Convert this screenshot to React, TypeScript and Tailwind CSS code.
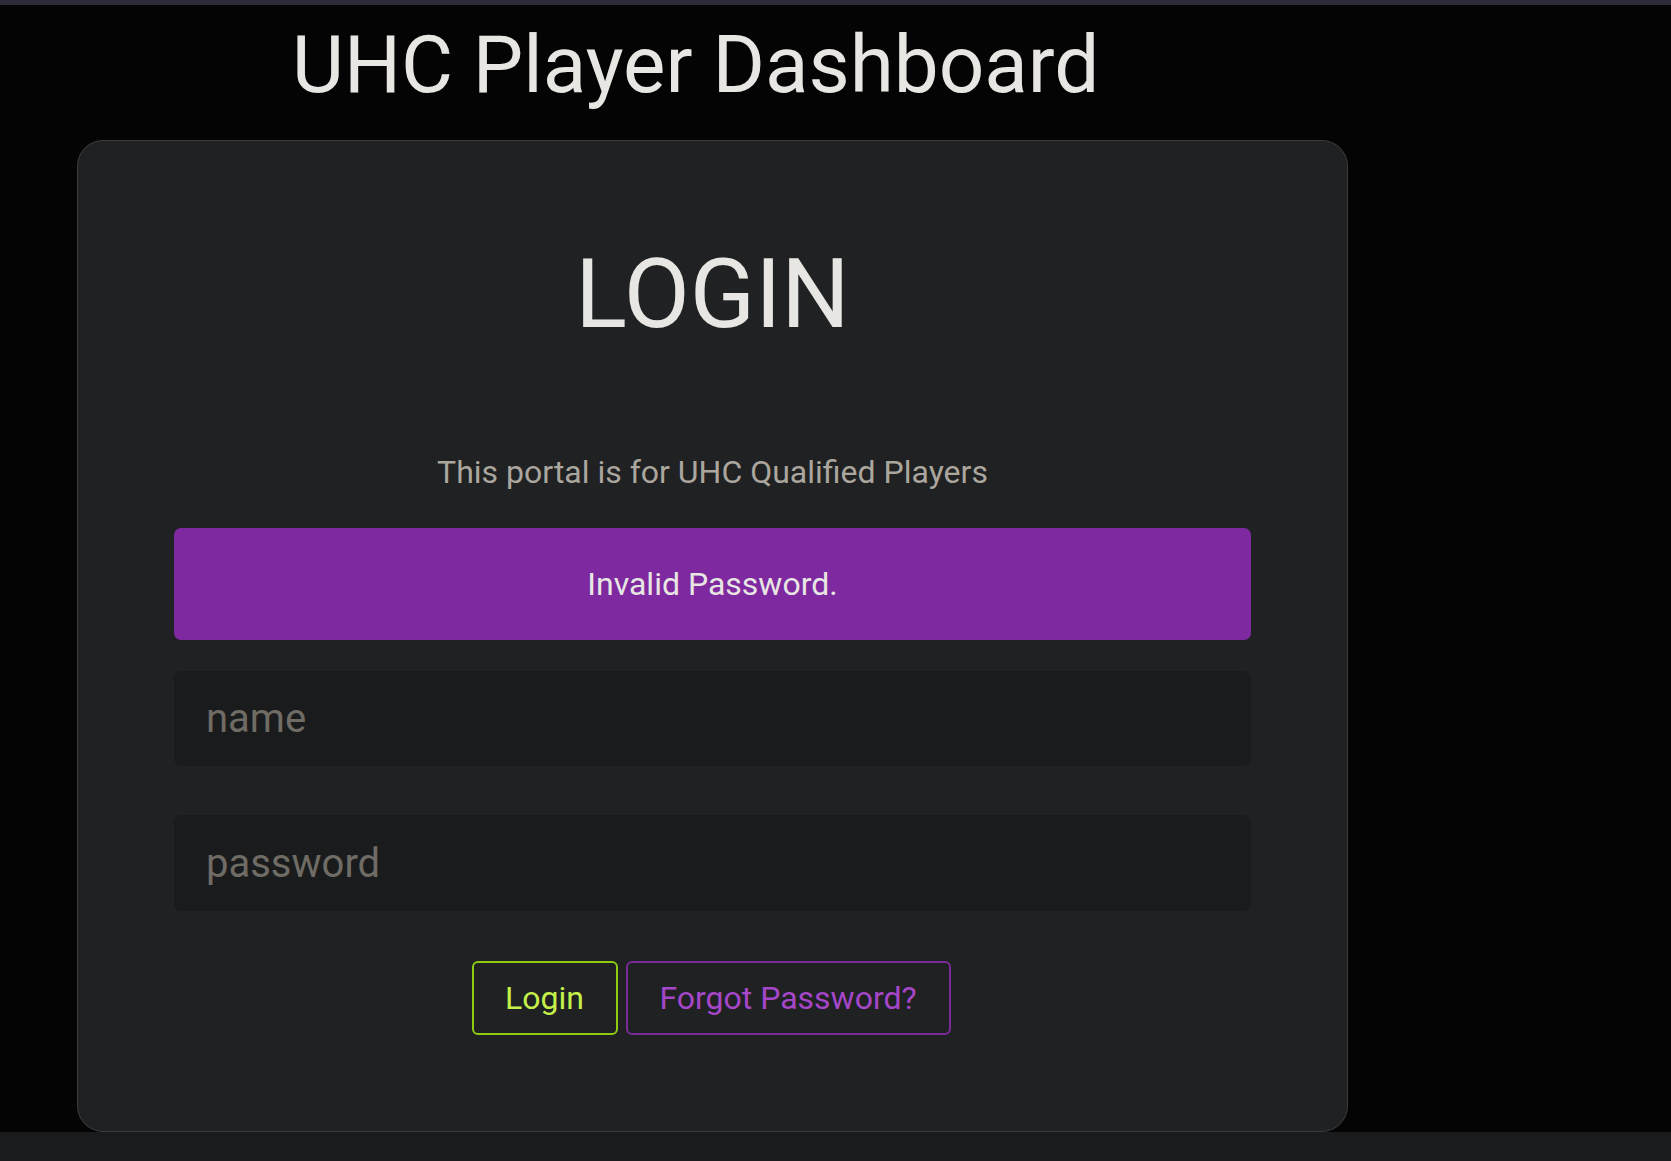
import React, { useState } from "react";

function App() {
  const [name, setName] = useState("");
  const [password, setPassword] = useState("");

  const handleLoginClick = () => {
    console.log("login", name);
  };
  const handleForgotClick = () => {
    console.log("forgot");
  };

  return (
    <div className="min-h-[1161px] bg-[#040404] font-['Roboto',sans-serif] flex flex-col">
      <div className="h-[5px] bg-[#2c2b37]"></div>
      <h1 className="mt-[13px] pl-[292px] text-[80px] leading-[94px] font-normal text-[#e8e6e3]">
        UHC Player Dashboard
      </h1>
      <div className="mt-[28px] ml-[77px] w-[1271px] rounded-[26px] border border-[#3a3c3e] bg-[#1f2122] px-[96px] pt-[97px] pb-[96px]">
        <div className="text-center text-[96px] leading-[113px] text-[#e8e6e3]">
          LOGIN
        </div>
        <p className="mt-[102px] text-center text-[32px] leading-[38px] text-[#aba69e]">
          This portal is for UHC Qualified Players
        </p>
        <div className="mt-[37px] flex h-[112px] items-center justify-center rounded-[7px] bg-[#7e29a0] text-[32px] text-[#e8e6e3]">
          Invalid Password.
        </div>
        <input
          type="text"
          placeholder="name"
          value={name}
          onChange={(e) => setName(e.target.value)}
          className="mt-[31px] block h-[95px] w-full rounded-[8px] bg-[#1a1b1c] pl-8 text-[40px] text-[#e8e6e3] outline-none placeholder:text-[#6f6b65]"
        />
        <input
          type="password"
          placeholder="password"
          value={password}
          onChange={(e) => setPassword(e.target.value)}
          className="mt-[49px] block h-[96px] w-full rounded-[8px] bg-[#1a1b1c] pl-8 text-[40px] text-[#e8e6e3] outline-none placeholder:text-[#6f6b65]"
        />
        <div className="mt-[50px] flex justify-center gap-2 pr-[3px]">
          <button
            onClick={handleLoginClick}
            className="h-[74px] w-[146px] rounded-[6px] border-2 border-[#8ccb10] text-[32px] text-[#c5f04a]"
          >
            Login
          </button>
          <button
            onClick={handleForgotClick}
            className="h-[74px] w-[325px] rounded-[6px] border-2 border-[#7b2a98] text-[32px] text-[#a646c9]"
          >
            Forgot Password?
          </button>
        </div>
      </div>
      <div className="h-[29px] bg-[#1a1b1d]"></div>
    </div>
  );
}

export default App;
